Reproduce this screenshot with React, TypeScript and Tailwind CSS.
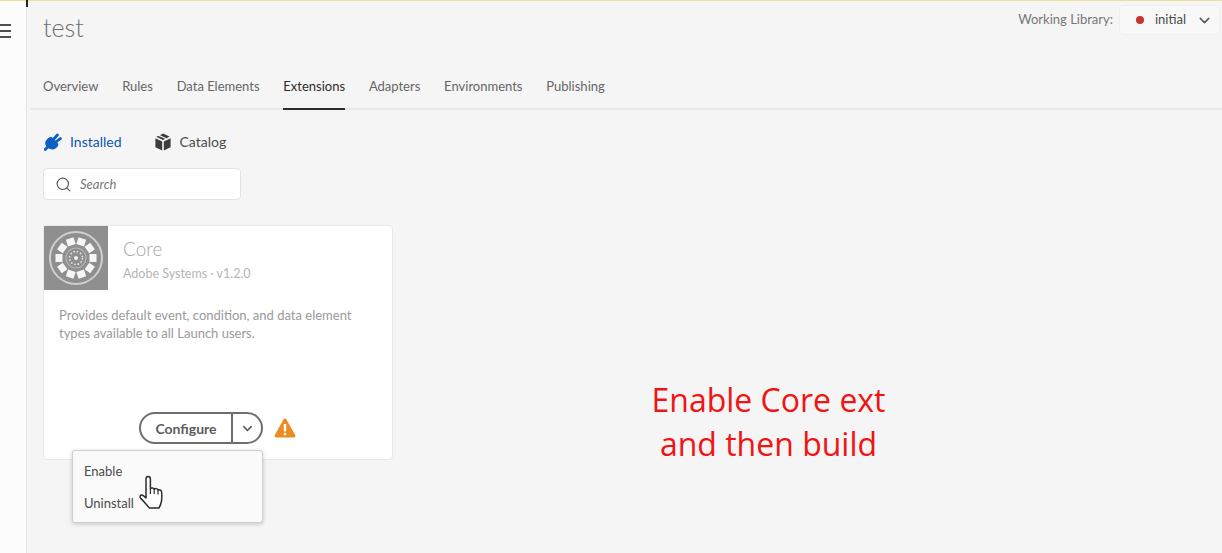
import { ChevronDown, Search } from 'lucide-react';

const tabs = ['Overview', 'Rules', 'Data Elements', 'Extensions', 'Adapters', 'Environments', 'Publishing'];

function CoreLogo() {
  const spokes = Array.from({ length: 10 }, (_, i) => i * 36 + 18);
  return (
    <svg width="64" height="64" viewBox="0 0 64 64" className="block shrink-0">
      <rect width="64" height="64" fill="#8f8f8f" />
      <circle cx="32" cy="32" r="26" fill="none" stroke="#cfcfcf" strokeWidth="2" />
      {spokes.map((a) => (
        <rect key={a} x="28" y="11.5" width="8" height="7" fill="#f5f5f5" transform={`rotate(${a} 32 32)`} />
      ))}
      <circle cx="32" cy="32" r="10" fill="none" stroke="#b5b5b5" strokeWidth="1.2" />
      <circle cx="32" cy="32" r="6.5" fill="none" stroke="#e8e8e8" strokeWidth="1.5" strokeDasharray="1.6 1.8" />
      <circle cx="32" cy="32" r="2" fill="#f0f0f0" />
    </svg>
  );
}

function HandCursor() {
  return (
    <svg width="26" height="36" viewBox="0 0 26 36" className="absolute left-[138px] top-[475px]">
      <path
        d="M8 20V4.2C8 2.6 9 1.6 10.2 1.6S12.4 2.6 12.4 4.2V13.5C13 12.6 15.6 12.6 16.2 14.2C17 13.2 19.4 13.4 20 15C21 14.4 23.4 14.8 23.6 17C24 21 24 25 23 28C22.4 30.4 21.6 31.6 21 33H11.5C9 30.5 6.5 27 2.8 23.4C1 21.6 2.6 19.4 4.6 20.2C6 20.8 7 21.8 8 23Z"
        fill="#ffffff"
        stroke="#2c2c2c"
        strokeWidth="1.5"
        strokeLinejoin="round"
      />
      <path d="M12.4 13.5V19M16.2 14.2V19M20 15V19.5" fill="none" stroke="#2c2c2c" strokeWidth="1.2" />
    </svg>
  );
}

function PlugIcon() {
  return (
    <svg width="18" height="18" viewBox="0 0 18 18" className="shrink-0">
      <path d="M7.4 3.8L14.2 10.6C14.8 13 12.2 16.4 8.4 16.4C4.2 16.4 1.2 13.2 1.2 10C1.2 7.4 4.8 4 7.4 3.8Z" fill="#0d5fc4" />
      <path d="M9.8 6L13.4 2M12.2 8.6L16.4 5.6M3.2 14.6L1.2 16.6" stroke="#0d5fc4" strokeWidth="2.8" strokeLinecap="round" fill="none" />
    </svg>
  );
}

function BoxIcon() {
  return (
    <svg width="18" height="18" viewBox="0 0 18 18" className="shrink-0">
      <path d="M9 0.6L15.6 3.4L12.6 5.2L6 2.2Z" fill="#3d3d3d" />
      <path d="M4.4 3L2.2 3.8L9 7L11.2 5.8Z" fill="#3d3d3d" />
      <path d="M1.4 5.2L8.2 8.4V17.4L1.4 14.2Z" fill="#3d3d3d" />
      <path d="M16.6 5.2L9.8 8.4V17.4L16.6 14.2Z" fill="#3d3d3d" />
    </svg>
  );
}

function WarnIcon() {
  return (
    <svg width="22" height="20" viewBox="0 0 22 20" className="shrink-0">
      <path d="M9.5 1.4C10.2 0.2 11.8 0.2 12.5 1.4L21.2 17C21.9 18.3 21 19.6 19.6 19.6H2.4C1 19.6 0.1 18.3 0.8 17Z" fill="#ec8c20" />
      <rect x="9.8" y="6" width="2.4" height="7.4" fill="#fff" />
      <rect x="9.8" y="14.8" width="2.4" height="2.4" fill="#fff" />
    </svg>
  );
}

export default function App() {
  return (
    <div className="relative flex h-[553px] w-[1222px] overflow-hidden bg-[#f5f5f5] font-['Lato',sans-serif] text-[#4b4b4b]">
      <div className="absolute left-0 right-0 top-0 h-px bg-[#f2dd95]" />
      <div className="absolute left-[26px] top-0 h-[7px] w-[2px] bg-[#222]" />

      <aside className="flex w-[27px] shrink-0 flex-col border-r border-[#e6e6e6] bg-[#fdfcfd] pt-6">
        <div className="flex w-[11px] flex-col gap-[4px]">
          <span className="h-[2px] bg-[#505050]" />
          <span className="h-[2px] bg-[#505050]" />
          <span className="h-[2px] bg-[#505050]" />
        </div>
      </aside>

      <main className="flex min-w-0 flex-1 flex-col">
        <header className="flex h-[60px] items-start justify-between pl-4 pr-[2px]">
          <h1 className="mt-[9px] text-[25px] font-light leading-9 text-[#6e6e6e]">test</h1>
          <div className="mt-[5px] flex items-center gap-[6px]">
            <span className="text-[13px] text-[#777]">Working Library:</span>
            <div className="flex h-[30px] w-[101px] items-center rounded-[4px] border border-[#efefef] bg-[#f8f8f8] pl-[16px]">
              <span className="h-2 w-2 rounded-full bg-[#c5332b]" />
              <span className="ml-[11px] text-[13px] text-[#4b4b4b]">initial</span>
              <ChevronDown size={17} strokeWidth={2} className="ml-[10px] text-[#555]" />
            </div>
          </div>
        </header>

        <nav className="ml-1 flex h-[50px] gap-[23.8px] border-b-2 border-[#e7e7e7] pl-3">
          {tabs.map((t) => (
            <div
              key={t}
              className={`-mb-[2px] flex h-[50px] items-center border-b-2 pt-[6px] text-[13px] ${
                t === 'Extensions' ? 'border-[#2c2c2c] text-[#2c2c2c]' : 'border-transparent text-[#666]'
              }`}
            >
              {t}
            </div>
          ))}
        </nav>

        <div className="flex min-h-0 flex-1 pl-4">
          <section className="w-[350px] shrink-0">
            <div className="mt-[21px] flex items-center text-[14px]">
              <div className="flex items-center gap-[8px] pl-[1px] text-[#0d56b0]">
                <PlugIcon />
                <span>Installed</span>
              </div>
              <div className="ml-[32px] flex items-center gap-[8px] text-[#4b4b4b]">
                <BoxIcon />
                <span>Catalog</span>
              </div>
            </div>

            <div className="mt-[16px] flex h-8 w-[198px] items-center rounded-[4px] border border-[#e3e3e3] bg-white pl-[11px]">
              <Search size={17} strokeWidth={1.6} className="text-[#555]" />
              <span className="ml-2 pt-[2px] text-[13px] italic text-[#777]">Search</span>
            </div>

            <article className="mt-[25px] flex h-[235px] w-[350px] flex-col rounded-[4px] border border-[#e8e8e8] bg-white">
              <div className="flex">
                <CoreLogo />
                <div className="ml-[15px] pt-[8px]">
                  <div className="text-[19px] font-light leading-[30px] text-[#a5a5a5]">Core</div>
                  <div className="text-[12.5px] leading-5 text-[#b5b5b5]">Adobe Systems · v1.2.0</div>
                </div>
              </div>
              <p className="mt-[16px] px-[15px] text-[13px] leading-[18px] text-[#9a9a9a]">
                Provides default event, condition, and data element types available to all Launch users.
              </p>
              <div className="mt-auto flex items-center pb-[15px] pl-[95px]">
                <div className="flex h-[32px] w-[124px] items-center rounded-full border-2 border-[#6e6e6e] text-[14px] font-bold text-[#5c5c5c]">
                  <span className="flex h-full flex-1 items-center justify-center border-r-2 border-[#6e6e6e]">Configure</span>
                  <span className="flex h-full w-[28px] items-center justify-center">
                    <ChevronDown size={15} strokeWidth={2.4} />
                  </span>
                </div>
                <span className="ml-[11px]">
                  <WarnIcon />
                </span>
              </div>
            </article>
          </section>

          <div className="flex flex-1 items-start justify-center">
            <p className="mt-[268px] mr-[78px] text-center font-['Open_Sans',sans-serif] text-[32px] leading-[44px] text-[#f01414]">
              Enable Core ext
              <br />
              and then build
            </p>
          </div>
        </div>
      </main>

      <div className="absolute left-[72px] top-[450px] flex h-[73px] w-[191px] flex-col justify-center gap-[11px] rounded-[3px] border border-[#cfcfcf] bg-[#fafafa] pl-[11px] pt-[2px] text-[13px] text-[#4b4b4b] shadow-[0_1px_4px_rgba(0,0,0,0.2)]">
        <span className="leading-[21px]">Enable</span>
        <span className="leading-[21px]">Uninstall</span>
      </div>
      <HandCursor />
    </div>
  );
}
